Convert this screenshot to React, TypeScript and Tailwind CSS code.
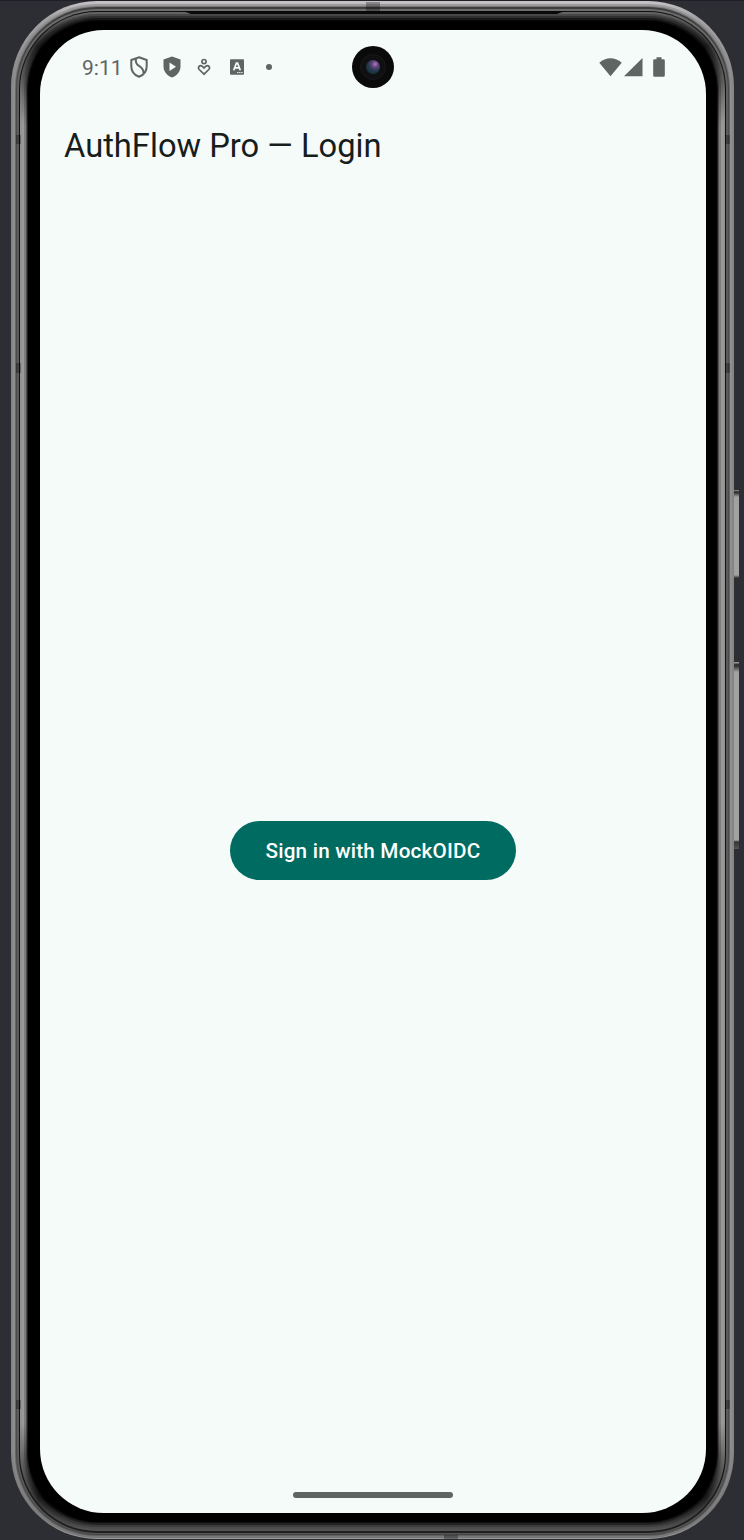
import React from "react";

const rings: string[] = [
  "rounded-[86px] px-[2px] pt-[3px] pb-[1px] bg-[linear-gradient(180deg,#c6c2c6_0px,#a5a3a5_16px,#858585_90px,#858585_1450px,#777_1515px,#999_1538px)]",
  "rounded-[84px] px-[2px] pt-[2px] pb-[2px] bg-[linear-gradient(180deg,#9c9a9c_0px,#8a8a8a_40px,#8e8e8e_100px,#8e8e8e_1430px,#777_1534px)]",
  "rounded-[82px] px-[1px] pt-[1px] pb-[1px] bg-[linear-gradient(180deg,#777_0px,#666_100px,#666_1430px,#606060_1530px)]",
  "rounded-[81px] px-[1px] pt-[2px] pb-[1px] bg-[linear-gradient(180deg,#3d3d3d_0px,#4c4c4c_100px,#4c4c4c_1430px,#454545_1528px)]",
  "rounded-[80px] px-[2px] pt-[2px] pb-[1px] bg-[linear-gradient(180deg,#6d6d6d_0px,#5c5c5c_100px,#5c5c5c_1430px,#555_1525px)]",
  "rounded-[78px] px-[1px] pt-[1px] pb-[2px] bg-[linear-gradient(180deg,#111_0px,#111_100px,#111_1430px,#202020_1523px)]",
  "rounded-[77px] px-[2px] pt-[2px] pb-[2px] bg-[linear-gradient(180deg,#646464_0px,#333_32px,#949494_110px,#949494_1410px,#333_1490px,#555_1520px)]",
  "rounded-[75px] px-[2px] pt-[2px] pb-[2px] bg-[linear-gradient(180deg,#484848_0px,#202020_32px,#999_110px,#999_1410px,#222_1485px,#505050_1517px)]",
  "rounded-[73px] px-[2px] pt-[2px] pb-[2px] bg-[linear-gradient(180deg,#303030_0px,#171717_30px,#7d7d7d_110px,#7d7d7d_1405px,#181818_1480px,#3e3e3e_1513px)]",
  "rounded-[72px] px-[1px] pt-[2px] pb-[2px] bg-[linear-gradient(180deg,#181818_0px,#080808_30px,#505050_110px,#505050_1405px,#080808_1480px,#252525_1509px)]",
  "rounded-[71px] px-[1px] pt-[1px] pb-[1px] bg-[linear-gradient(180deg,#080808_0px,#000_30px,#202020_110px,#202020_1405px,#000_1480px,#101010_1505px)]",
];

function Rings({ index = 0, children }: { index?: number; children: React.ReactNode }) {
  if (index === rings.length) return <>{children}</>;
  return (
    <div className={"h-full w-full " + rings[index]}>
      <Rings index={index + 1}>{children}</Rings>
    </div>
  );
}

function StatusBar() {
  return (
    <div className="flex h-[74px] items-center pl-[42px] pr-[41px] text-[#606462]">
      <span className="w-[47.500px] pt-[2px] text-[21px] leading-none">9:11</span>
      <svg className="h-[22px] w-[18px]" viewBox="0 0 18 22" fill="none" stroke="currentColor" strokeWidth="2">
        <path d="M9 1.2 16.700 4v6.200c0 5-3 8.800-7.700 10.600C4.300 19 1.300 15.200 1.300 10.200V4L9 1.200Z" />
        <path d="M6 2.500c-.7 3.500.2 5.700 3 7.400 3.700 2.200 4.700 4.300 4.500 7.400" />
      </svg>
      <svg className="ml-[15px] h-[22px] w-[18px]" viewBox="0 0 18 22">
        <path fill="currentColor" d="M9 .5 17.500 3.500v6.700c0 5.200-3.300 9.400-8.500 11.200C3.800 19.600.500 15.400.500 10.200V3.500L9 .500Z" />
        <path fill="#f5fbf9" d="M6.500 6.500v8.400l6.500-4.200-6.500-4.200Z" />
      </svg>
      <svg className="ml-[16.500px] h-[20px] w-[14px]" viewBox="0 0 14 20" fill="none" stroke="currentColor" strokeWidth="1.700">
        <circle cx="7" cy="4.600" r="2.100" />
        <path d="M7 17.200 2.200 12.500C.3 10.200 2.800 7.500 5.200 9.200L7 11l1.800-1.800c2.400-1.700 4.900 1 3 3.300L7 17.200Z" />
      </svg>
      <svg className="ml-[19px] h-[16px] w-[14px]" viewBox="0 0 14 16">
        <rect width="14" height="15.500" rx="1" y=".3" fill="currentColor" />
        <path d="m3.700 11.200 2.700-7h1.200l2.700 7M4.900 8.800h4.200" fill="none" stroke="#f5fbf9" strokeWidth="1.700" />
        <path d="M7 13.600h6" stroke="#f5fbf9" strokeWidth="1" strokeDasharray="1.400 .7" />
      </svg>
      <span className="ml-[22px] size-[6px] rounded-full bg-[#606462]" />
      <div className="ml-auto flex items-center">
        <svg className="h-[20px] w-[23px]" viewBox="0 0 23 20" fill="currentColor">
          <path d="M.3 5.800C6.600-.2 16.400-.2 22.700 5.800L11.500 19.300.3 5.800Z" />
        </svg>
        <svg className="ml-[2px] h-[20px] w-[19px]" viewBox="0 0 19 20" fill="currentColor">
          <path d="M0 19.300 18.500 1v18.300Z" />
        </svg>
        <svg className="ml-[10px] h-[20px] w-[12px]" viewBox="0 0 12 20" fill="currentColor">
          <path d="M3.500.3h5v2h2a1.300 1.300 0 0 1 1.300 1.300V18.400a1.300 1.300 0 0 1-1.300 1.300h-9A1.300 1.300 0 0 1 .2 18.400V3.600a1.300 1.300 0 0 1 1.300-1.300h2Z" />
        </svg>
      </div>
    </div>
  );
}

function Camera() {
  return (
    <div className="absolute left-[312px] top-[16px] flex size-[42px] items-center justify-center rounded-full bg-[#0a0a0b]">
      <div className="flex size-[26px] items-center justify-center rounded-full border border-[#19191b] bg-[#101012]">
        <div className="size-[14px] rounded-full bg-[radial-gradient(circle_at_65%_30%,#b27acb_0%,#66467c_22%,#273a51_48%,#18343f_70%,#17171b_100%)]" />
      </div>
    </div>
  );
}

const marks: string[] = [
  "left-[5px] top-[134px] w-[5px] h-[9px]",
  "right-[4px] top-[134px] w-[5px] h-[9px]",
  "left-[5px] top-[362px] w-[5px] h-[10px]",
  "right-[4px] top-[362px] w-[5px] h-[10px]",
  "left-[5px] top-[1399px] w-[5px] h-[9px]",
  "right-[4px] top-[1399px] w-[5px] h-[9px]",
  "left-[355px] top-[1px] w-[14px] h-[9px]",
  "left-[433px] bottom-[0px] w-[14px] h-[4px]",
];

export default function App() {
  return (
    <div className="flex h-[1540px] w-[744px] overflow-hidden border-t border-[#201e27] bg-[#2d2e33] pl-[11px] font-['Roboto',sans-serif]">
      <div className="relative h-[1538px] w-[723px] shrink-0">
        <Rings>
          <div className="h-full w-full rounded-[70px] bg-black pb-[9px] pl-[12px] pr-[11px] pt-[9px]">
            <main className="relative flex h-full w-full flex-col rounded-[64px] bg-[#f5fbf9]">
              <StatusBar />
              <Camera />
              <h1 className="flex h-[84px] items-center whitespace-nowrap pl-[24px] text-[32.700px] font-normal leading-none text-[#171d1b]">
                AuthFlow Pro — Login
              </h1>
              <div className="flex flex-1 flex-col items-center pt-[633px]">
                <button className="h-[59px] w-[286px] rounded-full bg-[#006b60] pt-[2px] text-[20.700px] font-medium leading-none tracking-[0.200px] text-white">
                  Sign in with MockOIDC
                </button>
              </div>
              <div className="mb-[15px] h-[6px] w-[160px] self-center rounded-[3px] bg-[#606462]" />
            </main>
          </div>
        </Rings>
        {marks.map((m) => (
          <span key={m} className={"absolute bg-black/30 " + m} />
        ))}
        <svg className="absolute left-[166px] top-[10px] h-[4px] w-[394px]" viewBox="0 0 394 4">
          <path d="M0 0h394q-8 0-14 3H14Q8 0 0 0Z" fill="#090909" />
        </svg>
      </div>
      <div className="flex w-[5px] flex-col pt-[489px]">
        <div className="h-[88px] bg-[linear-gradient(180deg,#999_0px,#222_2px,#555_4px,#a1a1a1_7px,#a1a1a1_85px,#333_88px)]" />
        <div className="mt-[84px] h-[187px] bg-[linear-gradient(180deg,#aaa_0px,#222_3px,#444_5px,#a1a1a1_10px,#a1a1a1_178px,#333_180px,#555_187px)]" />
      </div>
    </div>
  );
}
